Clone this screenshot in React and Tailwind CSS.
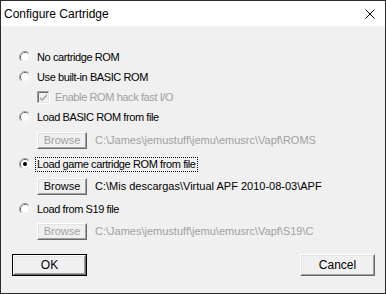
import React from "react";

const body = { fontFamily: '"Liberation Sans", Arial, sans-serif' };

function Radio({ checked }) {
    return (
        <svg width="12" height="12" viewBox="0 0 12 12" className="shrink-0">
            <path d="M2.11 9.89 A5.5 5.5 0 0 1 9.89 2.11" fill="none" stroke="#a0a0a0" />
            <path d="M9.89 2.11 A5.5 5.5 0 0 1 2.11 9.89" fill="none" stroke="#ffffff" />
            <path d="M2.82 9.18 A4.5 4.5 0 0 1 9.18 2.82" fill="none" stroke="#696969" />
            <path d="M9.18 2.82 A4.5 4.5 0 0 1 2.82 9.18" fill="none" stroke="#e3e3e3" />
            <circle cx="6" cy="6" r="4" fill="#ffffff" />
            {checked && <circle cx="6" cy="6" r="2" fill="#000000" />}
        </svg>
    );
}

function RadioRow({ label, checked, focused, className = "" }) {
    return (
        <div className={`flex h-[20px] items-center pl-[18px] ${className}`}>
            <Radio checked={checked} />
            <span
                className={`ml-[4px] px-[1px] leading-[13px] tracking-[-0.4px] ${focused ? "border border-dotted border-black" : "border border-transparent"}`}
            >
                {label}
            </span>
        </div>
    );
}

function Button3D({ children, disabled, isDefault, className = "" }) {
    const inner = (
        <div className="flex h-full w-full border border-t-white border-l-white border-r-[#696969] border-b-[#696969]">
            <div className="flex h-full w-full items-center justify-center border border-t-[#e3e3e3] border-l-[#e3e3e3] border-r-[#a0a0a0] border-b-[#a0a0a0] bg-[#f0f0f0]">
                <span className={disabled ? "text-[#a0a0a0]" : "text-black"}>{children}</span>
            </div>
        </div>
    );
    if (isDefault) {
        return <div className={`border border-black ${className}`}>{inner}</div>;
    }
    return <div className={className}>{inner}</div>;
}

function BrowseRow({ path, disabled, className = "" }) {
    return (
        <div className={`flex h-[17px] items-center pl-[36px] ${className}`}>
            <Button3D disabled={disabled} className="h-[17px] w-[50px] shrink-0">
                Browse
            </Button3D>
            <span className={`ml-[8px] whitespace-nowrap ${disabled ? "text-[#a0a0a0]" : "text-black"}`}>{path}</span>
        </div>
    );
}

export default function App() {
    return (
        <div className="flex h-[294px] w-[386px] flex-col border border-[#2b2b2b] bg-white">
            {/* title bar */}
            <div className="flex h-[25px] shrink-0 items-center justify-between bg-white pl-[3px] pr-[10px]">
                <span className="text-[12px] text-black" style={body}>
                    Configure Cartridge
                </span>
                <svg width="10" height="10" viewBox="0 0 10 10">
                    <path d="M0.5 0.5 L9.5 9.5 M9.5 0.5 L0.5 9.5" stroke="#000" strokeWidth="1" />
                </svg>
            </div>

            {/* dialog body */}
            <div className="flex flex-1 flex-col bg-[#f0f0f0] pt-[21px] text-[11px] tracking-[0px] text-black" style={body}>
                <RadioRow label="No cartridge ROM" />
                <RadioRow label="Use built-in BASIC ROM" />
                <div className="flex h-[20px] items-center pl-[36px]">
                    <svg width="13" height="13" viewBox="0 0 13 13" className="shrink-0">
                        <rect x="0" y="0" width="13" height="13" fill="#ffffff" />
                        <path d="M0.5 12 L0.5 0.5 L12 0.5" fill="none" stroke="#a0a0a0" />
                        <path d="M1.5 11 L1.5 1.5 L11 1.5" fill="none" stroke="#696969" />
                        <path d="M1 11.5 L11.5 11.5 L11.5 1" fill="none" stroke="#e3e3e3" />
                        <rect x="2" y="2" width="9" height="9" fill="#f0f0f0" />
                        <path d="M3 6 L5 8 L10 3 L10 5 L5 10 L3 8 Z" fill="#a0a0a0" />
                    </svg>
                    <span className="ml-[5px] tracking-[-0.4px] text-[#a0a0a0]">Enable ROM hack fast I/O</span>
                </div>
                <RadioRow label="Load BASIC ROM from file" />
                <BrowseRow disabled path="C:\James\jemustuff\jemu\emusrc\Vapf\ROMS" className="mt-[5px]" />
                <RadioRow label="Load game cartridge ROM from file" checked focused className="mt-[5px]" />
                <BrowseRow path="C:\Mis descargas\Virtual APF 2010-08-03\APF" className="mt-[4px]" />
                <RadioRow label="Load from S19 file" className="mt-[4px]" />
                <BrowseRow disabled path="C:\James\jemustuff\jemu\emusrc\Vapf\S19\C" className="mt-[4px]" />

                <div className="mt-[14px] flex items-center justify-between pl-[11px] pr-[10px] text-[12px]">
                    <Button3D isDefault className="h-[22px] w-[75px]">
                        OK
                    </Button3D>
                    <Button3D className="h-[22px] w-[75px]">Cancel</Button3D>
                </div>
            </div>
        </div>
    );
}
